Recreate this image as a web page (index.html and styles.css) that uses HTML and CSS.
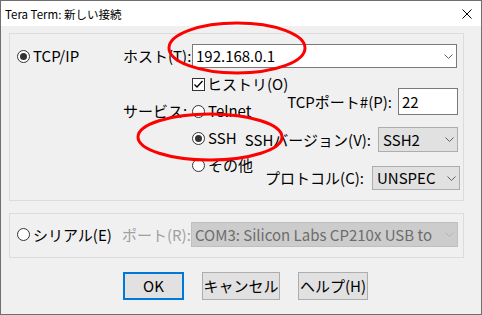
FILE: index.html
```html
<!DOCTYPE html>
<html lang="ja">
<head>
<meta charset="utf-8">
<title>Tera Term: 新しい接続</title>
<link rel="stylesheet" href="styles.css">
</head>
<body>
<div class="window">
  <div class="titlebar">
    <span class="title">Tera Term: 新しい接続</span>
    <svg class="close" width="10" height="10" viewBox="0 0 10 10"><path d="M0.5 0.5L9.5 9.5M9.5 0.5L0.5 9.5" stroke="#000" stroke-width="1" fill="none"/></svg>
  </div>
  <div class="client">
    <div class="group g1">
      <div class="row r-host">
        <div class="cell-a"><span class="radio on"></span><span>TCP/IP</span></div>
        <div class="cell-b">ホスト(T):</div>
        <div class="combo host"><span>192.168.0.1</span><svg class="chev" width="9" height="5" viewBox="0 0 9 5"><path d="M0.5 0.5L4.5 4.5L8.5 0.5" stroke="#606060" fill="none"/></svg></div>
      </div>
      <div class="lower">
        <div class="lower-left">
          <div class="r-hist"><span class="check"><svg width="11" height="11" viewBox="0 0 11 11"><path d="M1.5 5.5L4 8L9.5 2" stroke="#000" stroke-width="1.3" fill="none"/></svg></span><span>ヒストリ(O)</span></div>
          <div class="svc">
            <div class="svc-label">サービス:</div>
            <div class="svc-radios">
              <div class="opt"><span class="radio"></span><span>Telnet</span></div>
              <div class="opt"><span class="radio on"></span><span>SSH</span></div>
              <div class="opt"><span class="radio"></span><span>その他</span></div>
            </div>
          </div>
        </div>
        <div class="lower-right">
          <div class="field f-port"><span>TCPポート#(P):</span><div class="edit">22</div></div>
          <div class="field f-ver"><span>SSHバージョン(V):</span><div class="select sel-ver"><span>SSH2</span><svg class="chev" width="9" height="5" viewBox="0 0 9 5"><path d="M0.5 0.5L4.5 4.5L8.5 0.5" stroke="#606060" fill="none"/></svg></div></div>
          <div class="field f-proto"><span>プロトコル(C):</span><div class="select sel-proto"><span>UNSPEC</span><svg class="chev" width="9" height="5" viewBox="0 0 9 5"><path d="M0.5 0.5L4.5 4.5L8.5 0.5" stroke="#606060" fill="none"/></svg></div></div>
        </div>
      </div>
    </div>
    <div class="group g2">
      <div class="row r-serial">
        <div class="cell-a2"><span class="radio"></span><span>シリアル(E)</span></div>
        <div class="cell-b2 disabled">ポート(R):</div>
        <div class="combo serial"><span>COM3: Silicon Labs CP210x USB to</span><svg class="chev" width="9" height="5" viewBox="0 0 9 5"><path d="M0.5 0.5L4.5 4.5L8.5 0.5" stroke="#b4b4b4" fill="none"/></svg></div>
      </div>
    </div>
    <div class="buttons">
      <div class="btn btn-ok">OK</div>
      <div class="btn btn-cancel">キャンセル</div>
      <div class="btn btn-help">ヘルプ(H)</div>
    </div>
  </div>
  <svg class="marks" width="482" height="315" viewBox="0 0 482 315">
    <ellipse cx="237" cy="48" rx="68" ry="25" stroke="#f00" stroke-width="3" fill="none"/>
    <ellipse cx="210" cy="137" rx="72" ry="23" stroke="#f00" stroke-width="3" fill="none"/>
  </svg>
</div>
</body>
</html>
```
FILE: styles.css
```css
* { box-sizing: border-box; margin: 0; padding: 0; }
html, body { width: 482px; height: 315px; overflow: hidden; }
body {
  font-family: "Noto Sans CJK JP", "Noto Sans", sans-serif;
  font-size: 15px;
  line-height: 20px;
  color: #000;
  background: #f0f0f0;
  white-space: nowrap;
}
.window {
  position: relative;
  width: 482px;
  height: 315px;
  border: 1px solid #6f6f6f;
  display: flex;
  flex-direction: column;
  background: #f0f0f0;
}
.titlebar {
  height: 25px;
  flex: none;
  background: #fff;
  display: flex;
  align-items: center;
  justify-content: space-between;
  padding: 0 9px 0 4px;
  font-size: 11.5px;
  line-height: 16px;
}
.client { flex: 1; padding: 7px 0 0 8px; }
.group { border: 1px solid #dcdcdc; width: 455px; }
.g1 { height: 168px; padding-top: 10px; }
.row { display: flex; align-items: center; }
.r-host { height: 24px; }
.cell-a { flex: none; width: 113px; padding-left: 7px; display: flex; align-items: center; gap: 3px; }
.cell-b { flex: none; width: 69px; }
.radio {
  flex: none;
  position: relative;
  width: 13px;
  height: 13px;
  border: 1px solid #333;
  border-radius: 50%;
  background: #fff;
}
.radio.on::after {
  content: "";
  position: absolute;
  left: 2px;
  top: 2px;
  width: 7px;
  height: 7px;
  border-radius: 50%;
  background: #333;
}
.combo {
  flex: none;
  display: flex;
  align-items: center;
  justify-content: space-between;
  height: 24px;
  border: 1px solid #7a7a7a;
  background: #fff;
  padding: 0 3px 0 3px;
}
.host { width: 265px; }
.lower { display: flex; margin-left: 113px; }
.lower-left { flex: none; width: 126px; }
.r-hist { margin-top: 8px; height: 16px; padding-left: 69px; display: flex; align-items: center; gap: 2px; }
.check {
  flex: none;
  width: 13px;
  height: 13px;
  border: 1px solid #333;
  background: #fff;
  display: flex;
}
.svc { display: flex; margin-top: 9px; }
.svc-label { flex: none; width: 69px; height: 20px; }
.svc-radios { flex: none; display: flex; flex-direction: column; gap: 7px; }
.opt { height: 20px; display: flex; align-items: center; gap: 3px; }
.lower-right {
  flex: 1;
  min-width: 0;
  display: flex;
  flex-direction: column;
  align-items: flex-end;
  padding: 20px 5px 0 0;
}
.field { flex: none; display: flex; align-items: center; }
.f-port { height: 27px; gap: 6px; }
.f-ver { margin-top: 12px; height: 25px; gap: 7px; }
.f-proto { margin-top: 14px; height: 24px; gap: 8px; margin-right: -2px; }
.edit {
  flex: none;
  width: 60px;
  height: 27px;
  border: 1px solid #7a7a7a;
  background: #fff;
  padding-left: 3px;
  display: flex;
  align-items: center;
}
.select {
  flex: none;
  height: 100%;
  display: flex;
  align-items: center;
  justify-content: space-between;
  border: 1px solid #adadad;
  background: #e1e1e1;
  padding: 0 3px 0 4px;
}
.sel-ver { width: 80px; }
.sel-proto { width: 88px; }
.g2 { height: 45px; margin-top: 12px; padding-top: 8px; }
.r-serial { height: 25px; }
.cell-a2 { flex: none; width: 112px; padding-left: 7px; display: flex; align-items: center; gap: 3px; }
.cell-b2 { flex: none; width: 69px; }
.disabled { color: #a0a0a0; }
.serial {
  width: 267px;
  height: 25px;
  background: #cccccc;
  border-color: #bfbfbf;
  color: #6d6d6d;
  overflow: hidden;
}
.buttons { display: flex; gap: 18px; margin-top: 14px; padding-left: 114px; }
.btn {
  height: 28px;
  border: 1px solid #adadad;
  background: #e1e1e1;
  display: flex;
  align-items: center;
  justify-content: center;
}
.btn-ok { width: 61px; border: 2px solid #0078d7; }
.btn-cancel { width: 78px; }
.btn-help { width: 70px; }
.marks { position: absolute; left: -1px; top: -1px; pointer-events: none; }
```
